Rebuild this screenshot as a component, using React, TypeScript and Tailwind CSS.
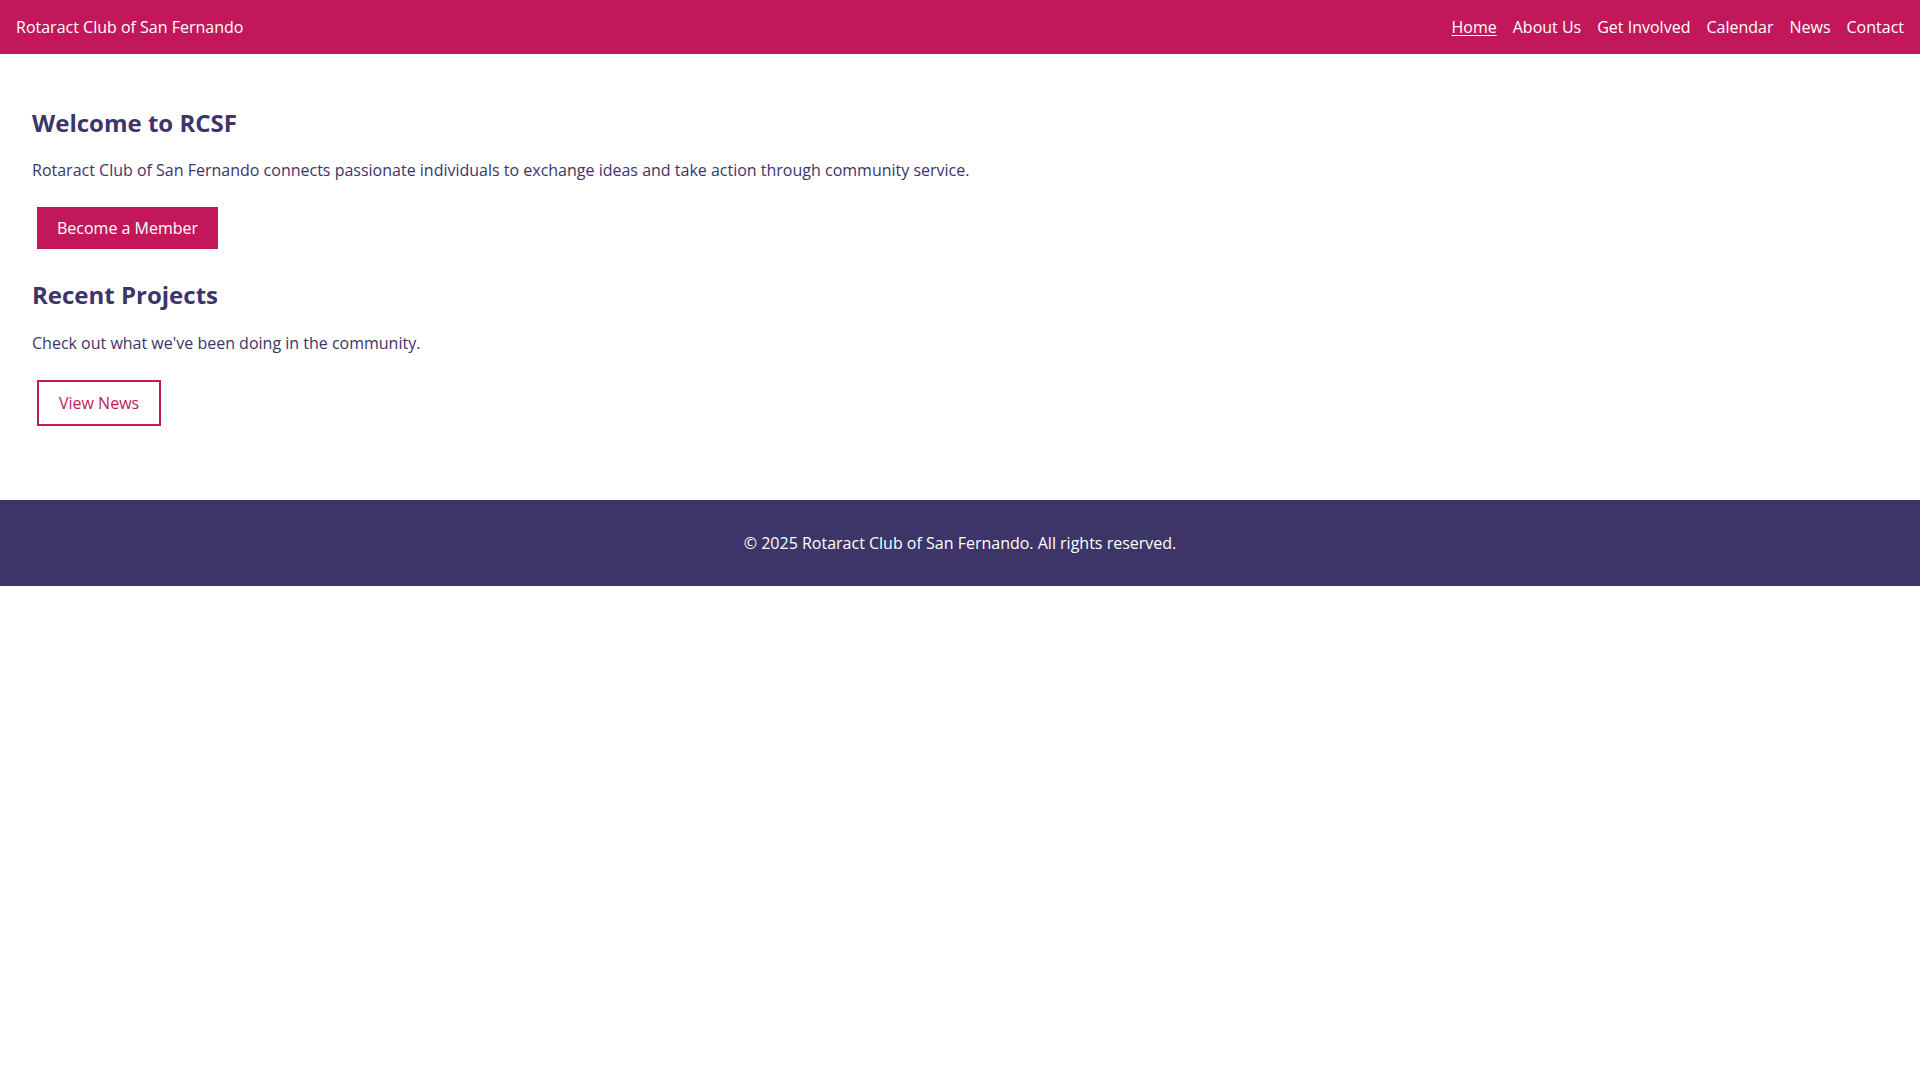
import React from 'react';

const navLinks = [
  { label: 'Home', active: true },
  { label: 'About Us' },
  { label: 'Get Involved' },
  { label: 'Calendar' },
  { label: 'News' },
  { label: 'Contact' },
];

export default function App() {
  return (
    <div className="min-h-screen bg-white text-[#3d3468]" style={{ fontFamily: '"Open Sans", "Liberation Sans", sans-serif' }}>
      <header className="h-[54px] bg-[#c2185b] px-4 flex items-center justify-between text-white text-base leading-[22px]">
        <div>Rotaract Club of San Fernando</div>
        <nav className="flex items-center gap-4">
          {navLinks.map((link) => (
            <a
              key={link.label}
              href="#"
              className={link.active ? 'underline underline-offset-[2px]' : ''}
            >
              {link.label}
            </a>
          ))}
        </nav>
      </header>

      <main className="px-8 pt-8 pb-[74px]">
        <section>
          <h2 className="mt-5 mb-5 text-2xl font-bold leading-[33px]">Welcome to RCSF</h2>
          <p className="text-base leading-[22px]">
            Rotaract Club of San Fernando connects passionate individuals to exchange ideas and take action through community service.
          </p>
          <div className="mt-[26px]">
            <a href="#" className="inline-block ml-[5px] bg-[#c2185b] text-white px-5 py-[10px] text-base leading-[22px]">
              Become a Member
            </a>
          </div>
        </section>

        <section>
          <h2 className="mt-[29px] mb-[21px] text-2xl font-bold leading-[33px]">Recent Projects</h2>
          <p className="text-base leading-[22px]">Check out what we've been doing in the community.</p>
          <div className="mt-[26px]">
            <a href="#" className="inline-block ml-[5px] border-2 border-[#c2185b] text-[#c2185b] px-5 py-[10px] text-base leading-[22px]">
              View News
            </a>
          </div>
        </section>
      </main>

      <footer className="bg-[#3d3468] text-white text-center py-8 text-base leading-[22px]">
        © 2025 Rotaract Club of San Fernando. All rights reserved.
      </footer>
    </div>
  );
}
